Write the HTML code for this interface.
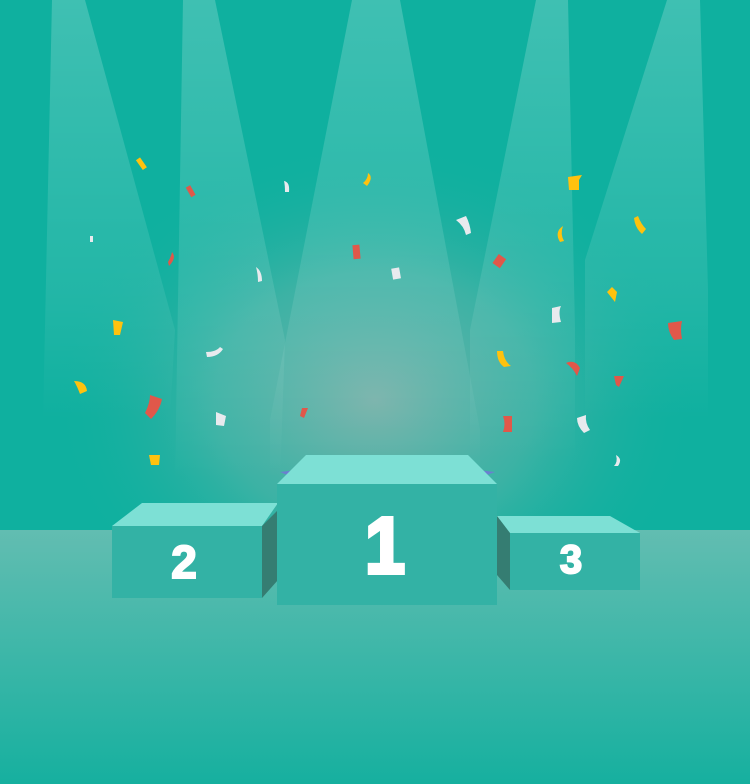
<!DOCTYPE html>
<html><head><meta charset="utf-8"><style>
html,body{margin:0;padding:0;width:750px;height:784px;overflow:hidden;background:#0fb09f}
svg{display:block}
</style></head><body>
<svg width="750" height="784" viewBox="0 0 750 784" xmlns="http://www.w3.org/2000/svg">
<defs>
<linearGradient id="floor" x1="0" y1="0" x2="0" y2="1">
<stop offset="0" stop-color="#62bdb1"/><stop offset="1" stop-color="#16b09f"/></linearGradient>
<linearGradient id="beam" x1="0" y1="0" x2="0" y2="1">
<stop offset="0" stop-color="#ffffff" stop-opacity="0.2"/><stop offset="0.7" stop-color="#ffffff" stop-opacity="0.08"/><stop offset="1" stop-color="#ffffff" stop-opacity="0"/></linearGradient>
<radialGradient id="glow" cx="375" cy="400" r="320" gradientUnits="userSpaceOnUse" gradientTransform="translate(375 400) scale(1 0.8) translate(-375 -400)">
<stop offset="0" stop-color="#78b2aa"/><stop offset="0.5" stop-color="#4fb3a7" stop-opacity="0.7"/><stop offset="1" stop-color="#12ae9e" stop-opacity="0"/></radialGradient>
</defs>
<rect width="750" height="530" fill="#0fb09f"/>
<rect width="750" height="530" fill="url(#glow)"/>
<polygon points="52,0 85,0 175,330 170,420 43,420" fill="url(#beam)"/>
<polygon points="183,0 215,0 285,340 280,480 175,480" fill="url(#beam)"/>
<polygon points="352,0 400,0 480,430 480,480 270,480 270,420" fill="url(#beam)"/>
<polygon points="536,0 568,0 575,330 575,460 470,460 470,330" fill="url(#beam)"/>
<polygon points="667,0 700,0 708,290 708,420 585,420 585,260" fill="url(#beam)"/>
<rect y="530" width="750" height="254" fill="url(#floor)"/>
<g>
<rect x="139" y="158" width="5" height="12" fill="#ffc20e" transform="rotate(-35 141 164)"/>
<rect x="188" y="186" width="5" height="11" fill="#e0584a" transform="rotate(-30 190 191)"/>
<path d="M284 181 q6 1 5 11 l-4 0 q0-7-1-11z" fill="#e8eaee"/>
<path d="M368 173 q6 4-1 13 l-4-3 q5-4 5-10z" fill="#ffc20e"/>
<rect x="90" y="236" width="3" height="6" fill="#e8eaee"/>
<path d="M172 252 q5 6-3 14 l-1-4 q3-5 4-10z" fill="#e0584a"/>
<path d="M256 267 q6 4 6 14 l-4 1 q0-8-2-15z" fill="#e8eaee"/>
<rect x="353" y="245" width="7" height="14" fill="#e0584a" transform="rotate(-5 356 252)"/>
<rect x="392" y="268" width="8" height="11" fill="#e8eaee" transform="rotate(-10 396 273)"/>
<path d="M456 220 l10-4 q4 8 5 17 l-5 2 q-2-9-10-15z" fill="#e8eaee"/>
<rect x="495" y="256" width="9" height="11" fill="#e0584a" transform="rotate(35 500 261)"/>
<path d="M568 177 l14-2 l-3 5 l0 10 l-10 0z" fill="#ffc20e"/>
<path d="M563 226 q-9 6-3 16 l4-1 q-4-7-1-15z" fill="#ffc20e"/>
<path d="M634 218 l4-2 q3 8 8 13 l-4 5 q-7-6-8-16z" fill="#ffc20e"/>
<path d="M113 320 l10 2 l-3 13 l-6 0z" fill="#ffc20e"/>
<path d="M206 352 q10 0 14-5 l3 2 q-5 8-16 8z" fill="#e8eaee"/>
<path d="M74 381 q12 0 13 10 l-7 3 q-3-8-6-13z" fill="#ffc20e"/>
<path d="M150 395 l12 4 q-2 11-11 20 l-6-6 q5-10 5-18z" fill="#e0584a"/>
<path d="M216 412 l10 4 l-2 10 l-8-1z" fill="#e8eaee"/>
<path d="M302 408 l6 0 l-4 10 l-4-2z" fill="#e0584a"/>
<path d="M149 455 l11 0 l-1 10 l-8 0z" fill="#ffc20e"/>
<path d="M612 287 l-5 5 l8 10 l2-10z" fill="#ffc20e"/>
<path d="M552 308 l9-2 q-3 6 0 16 l-9 1z" fill="#e8eaee"/>
<path d="M668 323 l14-2 q-2 8 0 18 l-8 1 q-6-8-6-17z" fill="#e0584a"/>
<path d="M497 351 l6 0 q1 10 8 15 l-7 1 q-7-5-7-16z" fill="#ffc20e"/>
<path d="M566 363 q9-4 14 5 l-3 8 q-4-8-11-13z" fill="#e0584a"/>
<path d="M614 376 l10 0 l-5 11 l-3-2z" fill="#e0584a"/>
<path d="M503 416 l9 0 l0 16 l-9 0 q3-8 0-16z" fill="#e0584a"/>
<path d="M577 418 l9-3 q-1 8 4 15 l-6 3 q-7-7-7-15z" fill="#e8eaee"/>
<path d="M616 455 q7 4 2 11 l-4 0 q4-4 2-11z" fill="#e8eaee"/>
</g>
<polygon points="280,472 296,470 290,476" fill="#6b7fd0"/>
<polygon points="478,470 495,472 484,476" fill="#6b7fd0"/>
<polygon points="142,503 278,503 262,526 112,526" fill="#7de0d5"/>
<polygon points="262,526 278,510 278,580 262,598" fill="#357d72"/>
<rect x="112" y="526" width="150" height="72" fill="#33b2a5"/>
<polygon points="497,516 610,516 640,533 510,533" fill="#7de0d5"/>
<polygon points="497,516 510,533 510,590 497,575" fill="#357d72"/>
<rect x="510" y="533" width="130" height="57" fill="#33b2a5"/>
<polygon points="306,455 468,455 497,484 277,484" fill="#7de0d5"/>
<rect x="277" y="484" width="220" height="121" fill="#33b2a5"/>
<g font-family="Liberation Sans, sans-serif" font-weight="bold" fill="#fff" text-anchor="middle">
<text x="385" y="573" font-size="80" stroke="#fff" stroke-width="4" transform="translate(385 573) scale(0.9 1) translate(-385 -573)">1</text>
<text x="184" y="578" font-size="46" stroke="#fff" stroke-width="2">2</text>
<text x="571" y="573" font-size="40" stroke="#fff" stroke-width="2">3</text>
</g>
</svg>
</body></html>
